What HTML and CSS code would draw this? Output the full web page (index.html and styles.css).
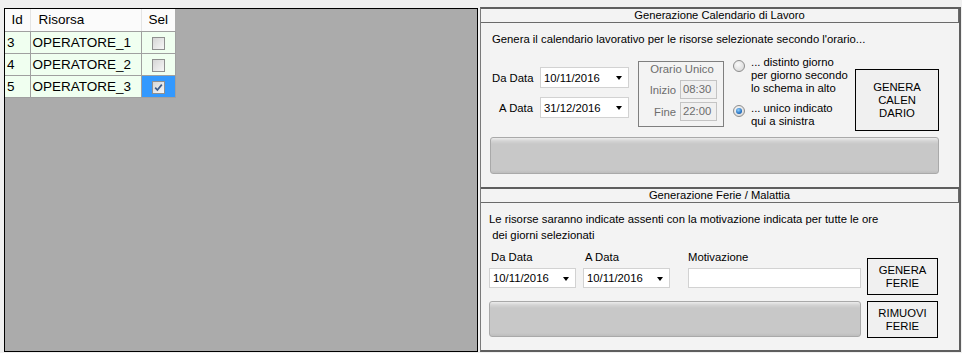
FILE: index.html
```html
<!DOCTYPE html>
<html lang="it">
<head>
    <meta charset="UTF-8">
    <title>Calendario Risorse</title>
    <link rel="stylesheet" href="styles.css">
</head>
<body>
    <div class="screen">
        <div class="grid-panel">
            <table class="grid">
                <thead>
                    <tr>
                        <th class="c-id">Id</th>
                        <th class="c-name">Risorsa</th>
                        <th class="c-sel">Sel</th>
                    </tr>
                </thead>
                <tbody>
                    <tr>
                        <td>3</td>
                        <td>OPERATORE_1</td>
                        <td class="sel"><span class="chk"></span></td>
                    </tr>
                    <tr>
                        <td>4</td>
                        <td>OPERATORE_2</td>
                        <td class="sel"><span class="chk"></span></td>
                    </tr>
                    <tr>
                        <td>5</td>
                        <td>OPERATORE_3</td>
                        <td class="sel active">
                            <span class="chk">
                                <svg width="11" height="11" viewBox="0 0 11 11"><path d="M2.2 5.6 L4.4 8 L8.8 2.6" fill="none" stroke="#3d5a87" stroke-width="1.7"/></svg>
                            </span>
                        </td>
                    </tr>
                </tbody>
            </table>
        </div>

        <div class="side">
            <section class="box cal">
                <div class="box-title">Generazione Calendario di Lavoro</div>
                <p class="intro">Genera il calendario lavorativo per le risorse selezionate secondo l'orario...</p>

                <div class="cal-row">
                    <div class="dates">
                        <div class="date-line">
                            <span class="lbl">Da Data</span>
                            <div class="combo"><span>10/11/2016</span><i class="arrow"></i></div>
                        </div>
                        <div class="date-line">
                            <span class="lbl">A Data</span>
                            <div class="combo"><span>31/12/2016</span><i class="arrow"></i></div>
                        </div>
                    </div>

                    <div class="orario">
                        <div class="orario-title">Orario Unico</div>
                        <div class="ora-line"><span class="ora-lbl">Inizio</span><span class="ora-box">08:30</span></div>
                        <div class="ora-line"><span class="ora-lbl">Fine</span><span class="ora-box">22:00</span></div>
                    </div>

                    <div class="radios">
                        <div class="radio-item">
                            <span class="radio"></span>
                            <span class="radio-text">... distinto giorno<br>per giorno secondo<br>lo schema in alto</span>
                        </div>
                        <div class="radio-item second">
                            <span class="radio on"><span class="dot"></span></span>
                            <span class="radio-text">... unico indicato<br>qui a sinistra</span>
                        </div>
                    </div>

                    <div class="btn btn-cal">GENERA<br>CALEN<br>DARIO</div>
                </div>

                <div class="progress cal-progress"></div>
            </section>

            <section class="box ferie">
                <div class="box-title">Generazione Ferie / Malattia</div>
                <p class="ferie-text">Le risorse saranno indicate assenti con la motivazione indicata per tutte le ore<br>&nbsp;dei giorni selezionati</p>

                <div class="ferie-row">
                    <div class="ferie-left">
                        <div class="fields">
                            <div class="field f-date">
                                <span class="field-lbl">Da Data</span>
                                <div class="combo small"><span>10/11/2016</span><i class="arrow"></i></div>
                            </div>
                            <div class="field f-date">
                                <span class="field-lbl">A Data</span>
                                <div class="combo small"><span>10/11/2016</span><i class="arrow"></i></div>
                            </div>
                            <div class="field f-motivo">
                                <span class="field-lbl">Motivazione</span>
                                <div class="textbox"></div>
                            </div>
                        </div>
                        <div class="progress ferie-progress"></div>
                    </div>
                    <div class="ferie-buttons">
                        <div class="btn btn-ferie">GENERA<br>FERIE</div>
                        <div class="btn btn-ferie">RIMUOVI<br>FERIE</div>
                    </div>
                </div>
            </section>
        </div>
    </div>
</body>
</html>
```

FILE: styles.css
```css
* {
    margin: 0;
    padding: 0;
    box-sizing: border-box;
}

body {
    background-color: #f0f0f0;
    font-family: 'Liberation Sans', Arial, sans-serif;
    font-size: 11.3px;
    color: #000;
    width: 962px;
    height: 353px;
    overflow: hidden;
}

.screen {
    display: flex;
    align-items: flex-start;
    padding-top: 7px;
}

/* left: data grid */
.grid-panel {
    margin-left: 4px;
    margin-top: 1px;
    width: 474px;
    height: 344px;
    border: 1px solid #000;
    background-color: #ababab;
}

.grid {
    border-collapse: collapse;
    table-layout: fixed;
    font-size: 13.5px;
}

.grid th {
    height: 22px;
    font-weight: normal;
    background-color: #fbfbfb;
    border-right: 1px solid #e4e4e4;
    border-bottom: 1px solid #a0a0a0;
    text-align: left;
    padding: 0 0 1px 0;
}

.grid th:last-child {
    border-right: none;
}

.c-id {
    width: 25px;
    text-align: center !important;
}

.c-name {
    width: 111px;
    padding-left: 8px !important;
}

.c-sel {
    width: 34px;
    text-align: center !important;
}

.grid td {
    height: 22px;
    background-color: #f0fff0;
    border: 1px solid #a0a0a0;
    padding: 0 0 0 2px;
    white-space: nowrap;
}

.grid td:first-child {
    border-left: none;
}

.grid td.sel {
    padding: 0;
    text-align: center;
}

.grid td.active {
    background-color: #3399ff;
}

.chk {
    display: inline-flex;
    align-items: center;
    justify-content: center;
    width: 13px;
    height: 13px;
    margin-top: 3px;
    border: 1px solid #8f8f8f;
    background: linear-gradient(135deg, #d6d6d6, #f7f7f7);
    vertical-align: top;
}

/* right: generation panels */
.side {
    margin-left: 2px;
    width: 481px;
    height: 345px;
    border: 2px solid #5e5e5e;
    border-left: 1px solid #7a7a7a;
    background-color: #f3f3f3;
    display: flex;
    flex-direction: column;
}

.box-title {
    height: 14px;
    line-height: 13px;
    text-align: center;
    border-bottom: 1px solid #6a6a6a;
    border-right: 1px solid #6a6a6a;
    font-size: 11.2px;
}

.cal {
    height: 178px;
}

.intro {
    margin: 10px 0 0 11px;
    line-height: 13px;
}

.cal-row {
    display: flex;
    align-items: flex-start;
    margin-top: 10px;
    margin-left: 11px;
    white-space: nowrap;
}

.dates {
    margin-top: 11px;
    display: flex;
    flex-direction: column;
    gap: 9px;
}

.date-line {
    display: flex;
    align-items: center;
    gap: 7px;
}

.lbl {
    flex: none;
    width: 41px;
    text-align: right;
}

.combo {
    flex: none;
    width: 89px;
    height: 21px;
    background-color: #fff;
    border: 1px solid #d2d2d2;
    display: flex;
    align-items: center;
    justify-content: space-between;
    padding: 0 6px 0 3px;
}

.arrow {
    width: 0;
    height: 0;
    border-left: 3.5px solid transparent;
    border-right: 3.5px solid transparent;
    border-top: 4px solid #000;
    margin-top: 1px;
}

.orario {
    flex: none;
    margin-top: 5px;
    margin-left: 9px;
    width: 86px;
    height: 66px;
    border: 1px solid #7f7f7f;
    color: #6d6d6d;
}

.orario-title {
    text-align: center;
    line-height: 13px;
    margin-top: 1px;
    padding-left: 2px;
}

.ora-line {
    display: flex;
    align-items: center;
    gap: 4px;
    margin-top: 4px;
}

.ora-line + .ora-line {
    margin-top: 3px;
}

.ora-lbl {
    width: 37px;
    text-align: right;
}

.ora-box {
    width: 37px;
    height: 19px;
    line-height: 17px;
    border: 1px solid #c4c4c4;
    background-color: #f0f0f0;
    padding-left: 2px;
}

.radios {
    flex: none;
    margin-left: 9px;
    width: 116px;
    display: flex;
    flex-direction: column;
    gap: 7px;
}

.radio-item {
    display: flex;
    align-items: flex-start;
    gap: 6px;
}

.radio-text {
    line-height: 13px;
}

.radio {
    flex: none;
    width: 12px;
    height: 12px;
    margin-top: 4px;
    border-radius: 50%;
    border: 1px solid #8c8c8c;
    background: radial-gradient(circle at 40% 35%, #fafafa, #d2d2d2);
    display: flex;
    align-items: center;
    justify-content: center;
}

.second .radio {
    margin-top: 3px;
}

.dot {
    width: 6px;
    height: 6px;
    border-radius: 50%;
    background: radial-gradient(circle at 40% 35%, #8fd0ff, #1a66b8 70%, #0f4c8e);
}

.btn {
    flex: none;
    background-color: #f0f0f0;
    border: 1px solid #000;
    text-align: center;
    line-height: 13px;
    display: flex;
    align-items: center;
    justify-content: center;
}

.btn-cal {
    margin-top: 13px;
    margin-left: 6px;
    width: 84px;
    height: 62px;
}

.progress {
    height: 37px;
    border: 1px solid #a9a9a9;
    border-radius: 3px;
    background: linear-gradient(#ececec 0, #d4d4d4 3px, #c8c8c8 6px, #c8c8c8 calc(100% - 3px), #bdbdbd 100%);
}

.cal-progress {
    margin: 6px 0 0 9px;
    width: 449px;
}

/* ferie / malattia */
.ferie {
    flex: 1;
    border-top: 2px solid #5e5e5e;
}

.ferie-text {
    margin: 8px 0 0 8px;
    line-height: 16px;
}

.ferie-row {
    display: flex;
    align-items: flex-start;
    margin: 8px 0 0 8px;
}

.ferie-left {
    width: 372px;
}

.fields {
    display: flex;
}

.field {
    display: flex;
    flex-direction: column;
    gap: 4px;
}

.field-lbl {
    line-height: 13px;
    padding-left: 2px;
}

.f-date + .f-date {
    margin-left: 7px;
}

.f-motivo {
    margin-left: 18px;
}

.f-motivo .field-lbl {
    padding-left: 0;
}

.combo.small {
    width: 87px;
    height: 20px;
}

.textbox {
    width: 173px;
    height: 20px;
    background-color: #fff;
    border: 1px solid #d2d2d2;
}

.ferie-progress {
    margin-top: 13px;
    width: 372px;
    height: 36px;
}

.ferie-buttons {
    margin: 7px 0 0 6px;
    display: flex;
    flex-direction: column;
    gap: 6px;
}

.btn-ferie {
    width: 71px;
    height: 37px;
}
```
